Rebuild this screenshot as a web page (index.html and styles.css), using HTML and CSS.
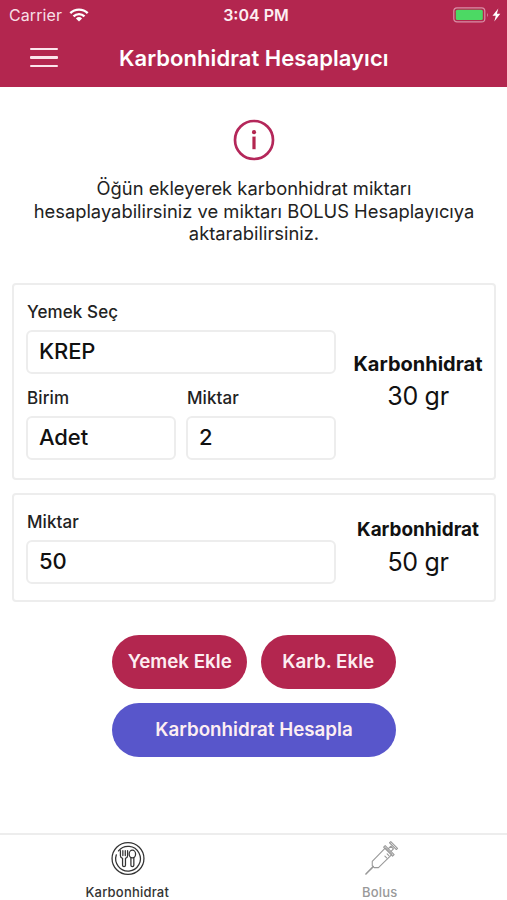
FILE: index.html
```
<!DOCTYPE html>
<html lang="tr">
<head>
    <meta charset="UTF-8">
    <meta name="viewport" content="width=device-width, initial-scale=1.0">
    <title>Karbonhidrat Hesaplayıcı</title>
    <link rel="stylesheet" href="styles.css">
</head>
<body>

    <header>
        <div class="status-bar">
            <div class="status-left">
                <span class="carrier">Carrier</span>
                <svg class="wifi" width="20" height="14" viewBox="0 0 20 14">
                    <path d="M1.3 5.2a12.4 12.4 0 0 1 17.4 0" />
                    <path d="M4.5 8.4a7.8 7.8 0 0 1 11 0" />
                    <path class="wifi-dot" d="M10 13.6 6.9 10.5a4.5 4.5 0 0 1 6.2 0z" />
                </svg>
            </div>
            <span class="time">3:04 PM</span>
            <div class="status-right">
                <svg width="50" height="16" viewBox="0 0 50 16">
                    <rect x=".8" y=".9" width="31" height="14" rx="3.2" fill="none" stroke="#d98fa6" stroke-width="1.2" />
                    <rect x="2.8" y="2.8" width="27" height="10.2" rx="1.5" fill="#4cd964" />
                    <path d="M34 5.8q1.8 2.2 0 4.4z" fill="#d98fa6" />
                    <path d="M45.3 1.5 39.5 8.8h3.3L41.3 14.5l6-7.7h-3.4z" fill="#fff" />
                </svg>
            </div>
        </div>
        <div class="nav-bar">
            <div class="menu">
                <span></span>
                <span></span>
                <span></span>
            </div>
            <h1>Karbonhidrat Hesaplayıcı</h1>
        </div>
    </header>

    <main>
        <div class="info">
            <svg width="42" height="42" viewBox="0 0 42 42">
                <circle cx="21" cy="21" r="19" fill="none" stroke="#b4275a" stroke-width="2.7" />
                <circle cx="21" cy="13.2" r="2.1" fill="#b3264f" />
                <path d="M21 17.6v12.6" stroke="#b3264f" stroke-width="3.2" />
            </svg>
            <p>Öğün ekleyerek karbonhidrat miktarı<br>hesaplayabilirsiniz ve miktarı BOLUS Hesaplayıcıya<br>aktarabilirsiniz.</p>
        </div>

        <div class="card meal">
            <div class="fields">
                <label for="food">Yemek Seç</label>
                <input type="text" id="food" value="KREP">
                <div class="field-row">
                    <div class="field">
                        <label for="unit">Birim</label>
                        <input type="text" id="unit" value="Adet">
                    </div>
                    <div class="field">
                        <label for="amount">Miktar</label>
                        <input type="text" id="amount" value="2">
                    </div>
                </div>
            </div>
            <div class="result">
                <h2>Karbonhidrat</h2>
                <p>30 gr</p>
            </div>
        </div>

        <div class="card carb">
            <div class="fields">
                <label for="carbAmount">Miktar</label>
                <input type="text" id="carbAmount" value="50">
            </div>
            <div class="result">
                <h2>Karbonhidrat</h2>
                <p>50 gr</p>
            </div>
        </div>

        <div class="buttons">
            <button>Yemek Ekle</button>
            <button>Karb. Ekle</button>
            <button class="calculate">Karbonhidrat Hesapla</button>
        </div>
    </main>

    <nav class="tabs">
        <div class="tab active">
            <svg width="36" height="36" viewBox="0 0 36 36" fill="none" stroke="#333" stroke-width="1.3" stroke-linecap="round" stroke-linejoin="round">
                <circle cx="18" cy="18" r="16.4" />
                <path d="M8.2 10.2A12.7 12.7 0 1 1 6 14.2" />
                <path d="M10.2 10v5.2q0 2 2.2 2.6V25q0 1.400 1.500 1.400t1.500-1.400v-7.200q2.200-.6 2.200-2.600V10M12.700 10v5M15.200 10v5" />
                <ellipse cx="22.5" cy="13.4" rx="3.3" ry="4" />
                <path d="M21 17.2V25q0 1.400 1.500 1.400t1.500-1.400v-7.800" />
            </svg>
            <span>Karbonhidrat</span>
        </div>
        <div class="tab">
            <svg width="36" height="36" viewBox="0 0 36 36" fill="none" stroke="#999" stroke-width="1.1" stroke-linecap="round" stroke-linejoin="round">
                <path d="M2.5 34 10 26.4" stroke-width="1.6" />
                <path d="M9 21v4.4l2 2h4.4L29.3 13.7 22.5 7z" />
                <path d="M20.7 6.3l1.6-1.6 9.2 9.2-1.6 1.6z" />
                <path d="M25.6 7.9l2.500-2.500 2.700 2.700-2.500 2.500M26.800 1.800l1.300-1.200 6.900 6.900-1.200 1.300z" />
                <path d="M22 15.5l1.8 1.8M24.3 13.2l1.8 1.8" />
            </svg>
            <span>Bolus</span>
        </div>
    </nav>

</body>
</html>
```
FILE: styles.css
```
* {
    box-sizing: border-box;
}
body {
    font-family: Inter, "Liberation Sans", sans-serif;
    margin: 0;
    height: 900px;
    display: flex;
    flex-direction: column;
    background-color: #fff;
    color: #222;
    overflow: hidden;
}
h1, h2, p {
    margin: 0;
}
header {
    height: 87px;
    background-color: #b3264f;
    color: #fff;
}
.status-bar {
    display: grid;
    grid-template-columns: 1fr auto 1fr;
    align-items: center;
    height: 30px;
    padding: 0 4px 0 9px;
}
.status-left {
    display: flex;
    align-items: center;
    gap: 7px;
}
.carrier {
    font-size: 16px;
    color: #f7dfe6;
    letter-spacing: 0.1px;
}
.wifi {
    fill: none;
    stroke: #fff;
    stroke-width: 2.4;
}
.wifi .wifi-dot {
    fill: #fff;
    stroke: none;
}
.time {
    font-size: 16px;
    font-weight: 600;
    color: #fdeef2;
}
.status-right {
    display: flex;
    justify-content: flex-end;
}
.nav-bar {
    display: flex;
    align-items: center;
    height: 55px;
    padding-left: 30px;
}
.menu {
    display: flex;
    flex-direction: column;
    gap: 6.4px;
    width: 28px;
    margin-right: 61px;
}
.menu span {
    height: 2.4px;
    border-radius: 1px;
    background-color: #fce4ec;
}
h1 {
    font-size: 22px;
    font-weight: 600;
    letter-spacing: 0.05px;
    white-space: nowrap;
}
main {
    flex: 1;
    padding: 32px 11px 0 12px;
}
.info {
    display: flex;
    flex-direction: column;
    align-items: center;
    height: 164px;
}
.info p {
    margin-top: 16px;
    font-size: 18.35px;
    line-height: 22.7px;
    text-align: center;
    white-space: nowrap;
}
.card {
    display: flex;
    align-items: center;
    border: 2px solid #ededed;
    border-radius: 4px;
    padding-left: 12px;
}
.meal {
    height: 197px;
    margin-bottom: 13px;
}
.carb {
    height: 109px;
}
.fields {
    width: 310px;
    align-self: flex-start;
    padding-top: 16px;
}
label {
    display: block;
    font-size: 17px;
    font-weight: 500;
    line-height: 22px;
    letter-spacing: 0.1px;
    margin: 0 0 7px 1px;
}
input {
    display: block;
    width: 100%;
    height: 44px;
    padding: 0 11px 3px;
    border: 2px solid #ededed;
    border-radius: 6px;
    background-color: #fff;
    color: #111;
    font-family: inherit;
    font-size: 22px;
    font-weight: 500;
    letter-spacing: -0.1px;
}
.field-row {
    display: flex;
    gap: 10px;
    margin-top: 13px;
}
.field {
    flex: 1;
}
.result {
    flex: 1;
    padding: 4px 0 0 6px;
    text-align: center;
    color: #111;
}
.result h2 {
    font-size: 20px;
    font-weight: 700;
    line-height: 26px;
}
.carb .result h2 {
    font-size: 18.9px;
}
.result p {
    font-size: 25px;
    line-height: 39px;
    letter-spacing: -0.3px;
}
.buttons {
    display: grid;
    grid-template-columns: 135px 135px;
    justify-content: center;
    gap: 13.5px;
    padding-top: 33px;
}
button {
    height: 54px;
    padding: 0 0 1px;
    border: none;
    border-radius: 27px;
    background-color: #b3264f;
    color: #fdeef2;
    font-family: inherit;
    font-size: 18.8px;
    font-weight: 600;
    white-space: nowrap;
    cursor: pointer;
}
.calculate {
    grid-column: span 2;
    background-color: #5856cb;
}
.tabs {
    display: flex;
    height: 67px;
    border-top: 2px solid #ededed;
}
.tab {
    flex: 1;
    display: flex;
    flex-direction: column;
    align-items: center;
    padding-top: 6px;
    font-size: 13px;
    font-weight: 500;
    line-height: 16px;
    color: #999;
}
.tab span {
    margin: 8px 2px 0 0;
    letter-spacing: 0.2px;
}
.tab.active {
    padding-left: 2px;
    color: #333;
}
```
